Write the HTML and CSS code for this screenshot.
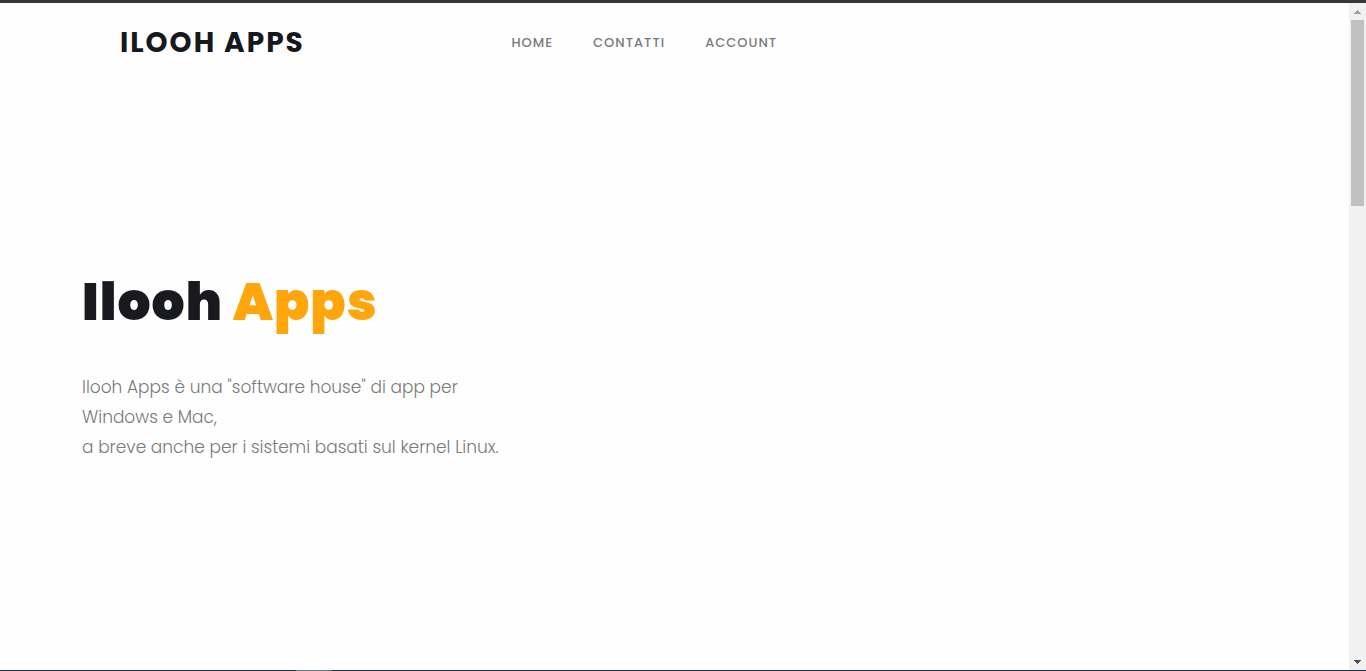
FILE: index.html
```html
<!DOCTYPE html>
<html lang="it">
<head>
<meta charset="utf-8">
<meta name="viewport" content="width=device-width, initial-scale=1">
<title>Ilooh Apps</title>
<link rel="stylesheet" href="styles.css">
</head>
<body>
<div class="window">
  <div class="viewport">
    <div class="page">
      <header class="header">
        <a class="brand" href="#">ILOOH APPS</a>
        <nav class="nav">
          <a class="nav-link" href="#">HOME</a>
          <a class="nav-link" href="#">CONTATTI</a>
          <a class="nav-link" href="#">ACCOUNT</a>
        </nav>
      </header>
      <main class="hero">
        <h1 class="title">Ilooh <span class="accent">Apps</span></h1>
        <p class="lead">Ilooh Apps è una "software house" di app per<br>Windows e Mac,<br>a breve anche per i sistemi basati sul kernel Linux.</p>
      </main>
    </div>
    <div class="scrollbar">
      <button class="scroll-button" type="button" aria-label="Scorri su">
        <svg width="7" height="4" viewBox="0 0 7 4" shape-rendering="crispEdges" fill="#a3a3a3"><path d="M3 0h1v1h1v1h1v1h1v1H0V3h1V2h1V1h1z"/></svg>
      </button>
      <div class="track"><div class="thumb"></div></div>
      <button class="scroll-button" type="button" aria-label="Scorri giù">
        <svg width="7" height="4" viewBox="0 0 7 4" shape-rendering="crispEdges" fill="#505050"><path d="M0 0h7v1H6v1H5v1H4v1H3V3H2V2H1V1H0z"/></svg>
      </button>
    </div>
  </div>
  <div class="taskbar"><div class="taskbar-item"></div></div>
</div>
</body>
</html>
```
FILE: styles.css
```css
* {
  box-sizing: border-box;
}

body {
  margin: 0;
  background: #fefefe;
  color: #7a7a7a;
  font-family: Poppins, Inter, "Liberation Sans", sans-serif;
}

.window {
  display: flex;
  flex-direction: column;
  height: 100vh;
  border-top: 3px solid #38373c;
}

.viewport {
  display: flex;
  flex: 1;
  min-height: 0;
}

.page {
  display: flex;
  flex: 1;
  flex-direction: column;
  min-width: 0;
}

.header {
  display: grid;
  grid-template-columns: 29% 1fr;
  align-items: center;
  height: 80px;
  padding-left: 120px;
}

.brand {
  color: #16181d;
  font-size: 28px;
  font-weight: 700;
  letter-spacing: 2px;
  text-decoration: none;
  white-space: nowrap;
}

.nav {
  display: flex;
  gap: 40px;
  padding-left: 35px;
}

.nav-link {
  color: #7a7a7a;
  font-size: 13px;
  font-weight: 500;
  letter-spacing: 1px;
  text-decoration: none;
}

.hero {
  display: flex;
  flex: 1;
  flex-direction: column;
  justify-content: center;
  gap: 38px;
  padding: 0 82px 22px;
}

.title {
  margin: 0;
  color: #191a20;
  font-size: 52px;
  font-weight: 900;
  letter-spacing: 1px;
  line-height: 64px;
}

.accent {
  color: #ffa60c;
}

.lead {
  margin: 0;
  font-size: 17px;
  font-weight: 300;
  line-height: 30px;
}

.scrollbar {
  display: flex;
  flex-direction: column;
  width: 17px;
  background: #f1f1f1;
}

.scroll-button {
  display: flex;
  align-items: center;
  justify-content: center;
  height: 17px;
  padding: 0;
  border: 0;
  background: transparent;
}

.track {
  flex: 1;
  padding: 0 2px;
}

.thumb {
  height: 186px;
  background: #c1c1c1;
}

.taskbar {
  height: 1px;
  padding-left: 296px;
  background: #20303a;
}

.taskbar-item {
  width: 36px;
  height: 1px;
  background: #69767e;
}
```
